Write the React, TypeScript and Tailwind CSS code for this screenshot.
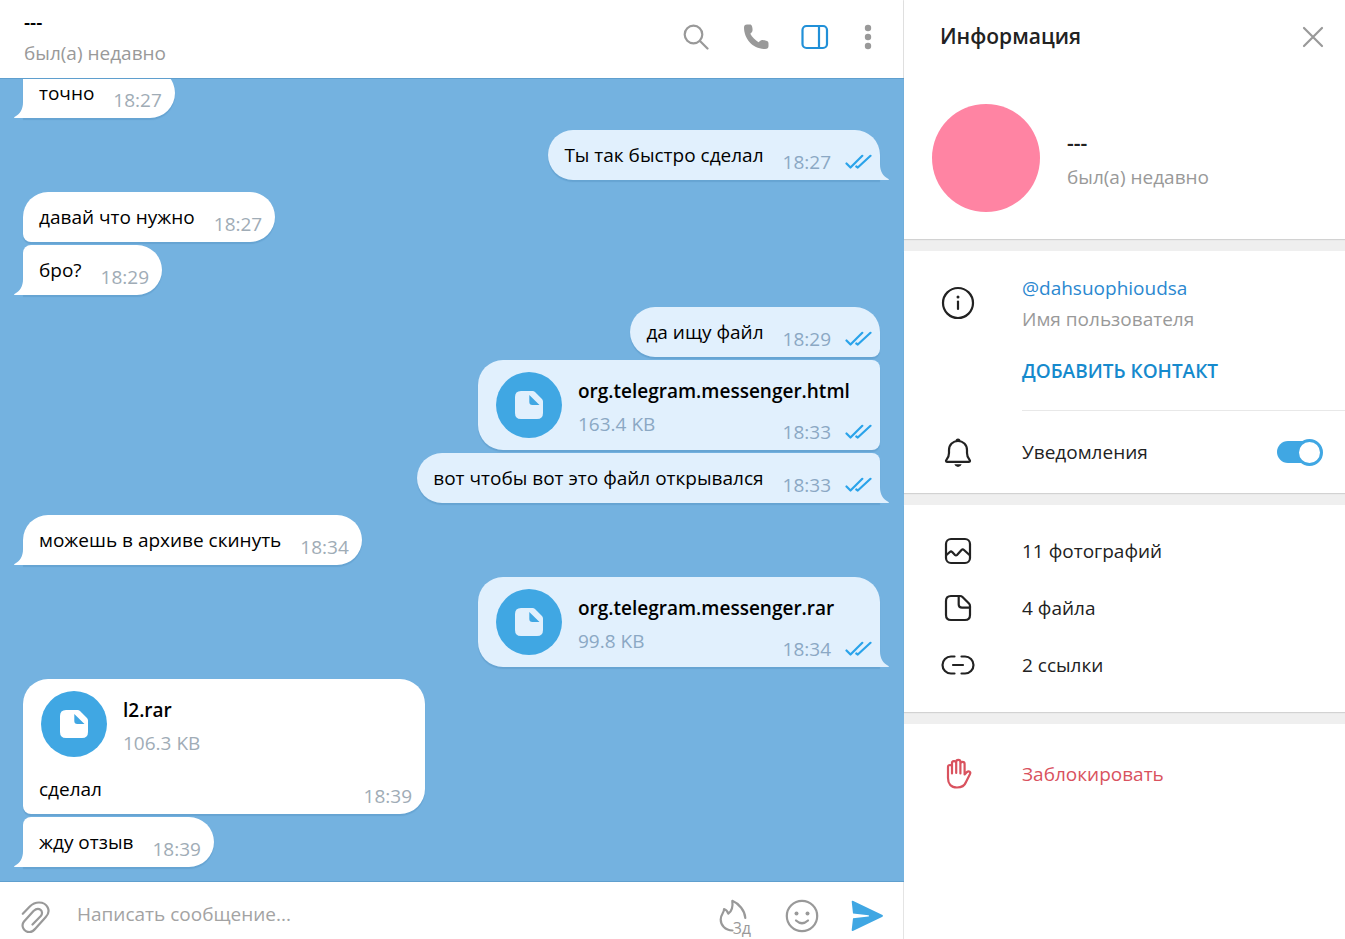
import React from "react";
import clsx from "clsx";

type Message = {
  id: number;
  out?: boolean;
  text?: string;
  file?: { name: string; size: string };
  time: string;
  // joined to the previous / next message of the same sender
  prev?: boolean;
  next?: boolean;
};

const messages: Message[] = [
  { id: 1, text: "точно", time: "18:27", prev: true },
  { id: 2, out: true, text: "Ты так быстро сделал", time: "18:27" },
  { id: 3, text: "давай что нужно", time: "18:27", next: true },
  { id: 4, text: "бро?", time: "18:29", prev: true },
  { id: 5, out: true, text: "да ищу файл", time: "18:29", next: true },
  {
    id: 6,
    out: true,
    file: { name: "org.telegram.messenger.html", size: "163.4 KB" },
    time: "18:33",
    prev: true,
    next: true,
  },
  {
    id: 7,
    out: true,
    text: "вот чтобы вот это файл открывался",
    time: "18:33",
    prev: true,
  },
  { id: 8, text: "можешь в архиве скинуть", time: "18:34" },
  {
    id: 9,
    out: true,
    file: { name: "org.telegram.messenger.rar", size: "99.8 KB" },
    time: "18:34",
  },
  {
    id: 10,
    file: { name: "l2.rar", size: "106.3 KB" },
    text: "сделал",
    time: "18:39",
    next: true,
  },
  { id: 11, text: "жду отзыв", time: "18:39", prev: true },
];

type IconProps = {
  w: number;
  h: number;
  className?: string;
  children: React.ReactNode;
};

function Icon({ w, h, className, children }: IconProps) {
  return (
    <svg
      width={w}
      height={h}
      viewBox={`0 0 ${w} ${h}`}
      fill="none"
      stroke="currentColor"
      strokeWidth="2.2"
      strokeLinecap="round"
      strokeLinejoin="round"
      aria-hidden="true"
      className={clsx("shrink-0", className)}
    >
      {children}
    </svg>
  );
}

function Checks() {
  return (
    <Icon w={27} h={16} className="text-[#2aa3ea]">
      <path d="M1.5 9.500 5.500 13.500 17.300 1.800M11.300 12.500 12.800 13.500 25.500 1.800" />
    </Icon>
  );
}

function FileBadge() {
  return (
    <span className="flex size-[66px] shrink-0 items-center justify-center rounded-full bg-[#40a7e3]">
      <svg width="28" height="28" viewBox="0 0 28 28" aria-hidden="true">
        <path
          fill="currentColor"
          fillRule="evenodd"
          d="M6 0H17.5Q19 0 20 1L27 8Q28 9 28 10.500V22Q28 28 22 28H6Q0 28 0 22V6Q0 0 6 0ZM14.300 4V11Q14.300 14 17.300 14H24.500Z"
        />
      </svg>
    </span>
  );
}

function Tail({ out }: { out?: boolean }) {
  return (
    <svg
      width="10"
      height="17"
      viewBox="0 0 10 17"
      aria-hidden="true"
      className={clsx(
        "absolute bottom-0",
        out ? "-right-[9px] -scale-x-100 text-[#e1f0fd]" : "-left-[9px] text-white"
      )}
    >
      <path fill="currentColor" d="M9 1H10V17H.5Q-.3 16.600 .5 16C6 13 9 8.500 9 1Z" />
    </svg>
  );
}

function Bubble({ message }: { message: Message }) {
  const { out, text, file, time, prev, next } = message;
  return (
    <li
      className={clsx(
        "relative shadow-[0_2px_1px_rgba(40,100,150,0.18)]",
        out
          ? "self-end rounded-l-[25px] bg-[#e1f0fd] pr-2"
          : "self-start rounded-r-[25px] bg-white pr-[13px]",
        out && (prev ? "rounded-tr-lg" : "rounded-tr-[25px]"),
        out && (next ? "rounded-br-lg" : "rounded-br-none"),
        !out && (prev ? "rounded-tl-lg" : "rounded-tl-[25px]"),
        !out && (next ? "rounded-bl-lg" : "rounded-bl-none"),
        next ? "mb-[3px]" : "mb-3",
        file && "w-[402px]"
      )}
    >
      {file && (
        <div className="flex gap-4 pt-3 pl-[18px]">
          <span className={out ? "text-[#e1f0fd]" : "text-white"}>
            <FileBadge />
          </span>
          <div className="pt-1.5 whitespace-nowrap">
            <a href="#file" className="block leading-[26px] font-semibold text-black">
              {file.name}
            </a>
            <p
              className={clsx(
                "mt-[7px] leading-[26px]",
                out ? "text-[#8ba8c4]" : "text-[#a0acb6]"
              )}
            >
              {file.size}
            </p>
          </div>
        </div>
      )}
      <div
        className={clsx(
          "flex items-end pl-4",
          file && !text && "-mt-[19px] pb-[5px]",
          file && text && "mt-[7px]"
        )}
      >
        {text && (
          <p className="py-3 pr-[19px] leading-[26px] whitespace-nowrap text-black">{text}</p>
        )}
        <span
          className={clsx(
            "ml-auto flex items-center gap-3.5 leading-[26px]",
            text && "pb-[5px]",
            out ? "text-[#8ba8c4]" : "text-[#a0acb6]"
          )}
        >
          <time>{time}</time>
          {out && <Checks />}
        </span>
      </div>
      {!next && <Tail out={out} />}
    </li>
  );
}

function ChatHeader() {
  return (
    <header className="flex h-[78px] shrink-0 items-center bg-white px-6 pb-1">
      <div className="min-w-0 flex-1">
        <h1 className="mb-[5px] leading-[26px] font-semibold text-black">---</h1>
        <p className="leading-[26px] text-[#999]">был(а) недавно</p>
      </div>
      <div className="flex items-center text-[#999]">
        <button type="button" aria-label="Поиск" className="mr-[35px]">
          <Icon w={26} h={26}>
            <circle cx="10.500" cy="10.500" r="8.800" />
            <path d="M17 17 24.500 24.500" />
          </Icon>
        </button>
        <button type="button" aria-label="Позвонить" className="mr-[31px]">
          <Icon w={26} h={26}>
            <path
              fill="currentColor"
              stroke="none"
              d="M3 .5C1 .5 0 1.800 0 3.500 0 15 9 25 21 25 23.500 25 24.500 24 24.500 22V19.500C24.500 17.500 23.500 17 22 16.700 18.500 16 17.500 15.700 16 17L14.500 18.300C11.500 16.500 8 13 6.300 9.800L7.800 8.200C8.800 7 8.800 5 8 2.200 7.600 1 7 .5 5.800 .5Z"
            />
          </Icon>
        </button>
        <button type="button" aria-label="Информация" className="mr-[35px] text-[#2190d8]">
          <Icon w={28} h={26}>
            <rect x="1.500" y="2" width="24.500" height="22" rx="4" />
            <path d="M18 2V24" />
          </Icon>
        </button>
        <button type="button" aria-label="Меню" className="mr-[7px]">
          <Icon w={8} h={26}>
            <g fill="currentColor" stroke="none">
              <circle cx="4" cy="4" r="3.200" />
              <circle cx="4" cy="13" r="3.200" />
              <circle cx="4" cy="22" r="3.200" />
            </g>
          </Icon>
        </button>
      </div>
    </header>
  );
}

function Composer() {
  return (
    <form
      className="flex h-[57px] shrink-0 items-center bg-white pt-2.5 pr-[19px] pl-[21px]"
      onSubmit={(e) => e.preventDefault()}
    >
      <button type="button" aria-label="Прикрепить файл" className="pt-1 text-[#999]">
        <Icon w={29} h={33}>
          <path d="M1.800 12.800 8.800 5.500C12 2.300 15 1.500 18 1.500 26.500 1.500 30.500 10 24.800 16L14.500 27.500C12.500 30 10.500 31 8.500 31 3 31 -.5 25 3 20.500L12.500 10C18 5 23.500 10.500 19.800 15L11.500 23.500" />
        </Icon>
      </button>
      <input
        type="text"
        aria-label="Сообщение"
        placeholder="Написать сообщение..."
        className="ml-[27px] h-8 min-w-0 flex-1 bg-transparent pb-1 outline-none placeholder:text-[#a3a3a3]"
      />
      <button
        type="button"
        aria-label="Автоудаление"
        className="relative mr-8 text-[#999]"
      >
        <Icon w={34} h={34}>
          <path d="M13.500 31.500C6 31.500 1.700 26 1.700 20.500 1.700 15 5.500 13.500 5 10 7 10.500 8.500 12.500 9.300 14.700 13 12 14 7 13.300 1.800 20 4.500 26 12 26.300 19" />
        </Icon>
        <span className="absolute right-0.5 -bottom-[3px] text-[16px] leading-4">3д</span>
      </button>
      <button type="button" aria-label="Эмодзи" className="mr-8 text-[#999]">
        <Icon w={34} h={34}>
          <circle cx="17" cy="17" r="15.200" />
          <g fill="currentColor" stroke="none">
            <circle cx="11.500" cy="14.500" r="2" />
            <circle cx="22.500" cy="14.500" r="2" />
          </g>
          <path d="M11 21.500Q17 27 23 21.500" />
        </Icon>
      </button>
      <button type="submit" aria-label="Отправить" className="text-[#40a7e3]">
        <Icon w={33} h={32}>
          <path
            fill="currentColor"
            stroke="none"
            d="M1.800 .7 31.500 15Q32.500 15.800 31.500 16.700L1.800 31Q.6 31.200 .7 30L2 18.200 17.500 16.600Q19 16 17.500 15.200L2 13.600 .7 1.500Q.8 .5 1.800 .7Z"
          />
        </Icon>
      </button>
    </form>
  );
}

const media = [
  {
    label: "11 фотографий",
    icon: (
      <Icon w={28} h={28}>
        <rect x="2" y="2" width="24" height="24" rx="5" />
        <path d="M2.500 18 5.800 15Q7 14 8.200 15L11 18Q12 19 13 18L17.500 13Q18.700 11.800 20 13L25.500 18" />
      </Icon>
    ),
  },
  {
    label: "4 файла",
    icon: (
      <Icon w={28} h={28}>
        <path d="M7 2H16Q17.500 2 18.500 3L25 9.500Q26 10.500 26 12V21Q26 26 21 26H7Q2 26 2 21V7Q2 2 7 2Z" />
        <path d="M14.700 2V10.500Q14.700 13.700 18 13.700H26" />
      </Icon>
    ),
  },
  {
    label: "2 ссылки",
    icon: (
      <Icon w={34} h={28}>
        <path d="M13.500 5.500H10A8.500 8.500 0 0 0 10 22.500H13.500M20.500 5.500H24A8.500 8.500 0 0 1 24 22.500H20.500M12 14H22" />
      </Icon>
    ),
  },
];

function InfoPanel() {
  const [notify, setNotify] = React.useState(true);

  return (
    <aside className="flex w-[441px] shrink-0 flex-col gap-3 bg-[#efefef] text-[#222]">
      <section className="bg-white pb-[27px] shadow-[0_1px_1px_rgba(0,0,0,0.12)]">
        <div className="flex h-[74px] items-center justify-between pr-[21px] pl-9">
          <h2 className="pb-0.5 text-[21px] leading-7 font-semibold">Информация</h2>
          <button type="button" aria-label="Закрыть" className="text-[#999]">
            <Icon w={22} h={22}>
              <path d="M2 2 20 20M20 2 2 20" />
            </Icon>
          </button>
        </div>
        <div className="mt-[30px] flex items-center gap-[27px] pl-7">
          <div className="size-[108px] rounded-full bg-[#ff84a3]" />
          <div className="pt-1">
            <p className="mb-2 text-[21px] leading-[26px] font-semibold">---</p>
            <p className="leading-[26px] text-[#999]">был(а) недавно</p>
          </div>
        </div>
      </section>

      <section className="bg-white shadow-[0_1px_1px_rgba(0,0,0,0.12)]">
        <div className="flex pt-6 pl-9">
          <Icon w={36} h={56}>
            <circle cx="18" cy="28" r="15" />
            <path d="M18 26.500V34" />
            <circle cx="18" cy="22" r="1.500" fill="currentColor" stroke="none" />
          </Icon>
          <div className="ml-[46px] flex-1 border-b border-[#e8e8e8] pb-[26px]">
            <a href="#username" className="block leading-[26px] text-[#2b88d0]">
              @dahsuophioudsa
            </a>
            <p className="mt-[5px] leading-[26px] text-[#999]">Имя пользователя</p>
            <button
              type="button"
              className="mt-[26px] block leading-[26px] font-semibold text-[#168acd]"
            >
              ДОБАВИТЬ КОНТАКТ
            </button>
          </div>
        </div>
        <label className="flex h-[82px] items-center pr-[22px] pl-9">
          <span className="mr-[46px] flex w-9 justify-center">
            <Icon w={28} h={32}>
              <path d="M3 25.800C1.800 25.800 1.700 24.500 2.500 23.700 4.300 21.800 5 20 5 17V14C5 8.500 9 5 14 5S23 8.500 23 14V17C23 20 23.700 21.800 25.500 23.700 26.300 24.500 26.200 25.800 25 25.800Z" />
              <path
                fill="currentColor"
                stroke="none"
                d="M11.500 5A2.500 2.500 0 1 1 16.500 5ZM10.300 28.200H17.700Q16.500 31 14 31T10.300 28.200Z"
              />
            </Icon>
          </span>
          <span className="flex-1">Уведомления</span>
          <span className="relative flex h-[27px] w-[46px] items-center">
            <input
              type="checkbox"
              role="switch"
              checked={notify}
              onChange={(e) => setNotify(e.target.checked)}
              className="peer h-[22px] w-11 appearance-none rounded-full bg-[#b5b5b5] checked:bg-[#40a7e3]"
            />
            <span className="pointer-events-none absolute top-0 left-0 size-[27px] rounded-full border-[3px] border-[#b5b5b5] bg-white peer-checked:right-0 peer-checked:left-auto peer-checked:border-[#40a7e3]" />
          </span>
        </label>
      </section>

      <section className="bg-white pt-[18px] pb-[18px] shadow-[0_1px_1px_rgba(0,0,0,0.12)]">
        {media.map((item) => (
          <button
            key={item.label}
            type="button"
            className="flex h-[57px] w-full items-center pl-9"
          >
            <span className="mr-[46px] flex w-9 justify-center pb-0.5">{item.icon}</span>
            {item.label}
          </button>
        ))}
      </section>

      <section className="flex-1 bg-white pt-[22px]">
        <button
          type="button"
          className="flex h-[57px] w-full items-center pl-9 text-[#d9525e]"
        >
          <span className="mr-[46px] flex w-9 justify-center pb-0.5 pl-0.5">
            <Icon w={28} h={32}>
              <path d="M3 20V9A2 2 0 0 1 7 9V5.500A2.100 2.100 0 0 1 11.200 5V4A2.100 2.100 0 0 1 15.400 4V6A2.100 2.100 0 0 1 19.600 6V16.500L22 14C24 12.500 26 14 25 16L21 24C19.500 28 17 29.500 12 29.500 6 29.500 3 26 3 20ZM7 9V15.500M11.200 5V15M15.400 6V15.500" />
            </Icon>
          </span>
          Заблокировать
        </button>
      </section>
    </aside>
  );
}

export default function App() {
  return (
    <div className="flex h-screen overflow-hidden bg-white font-['Open_Sans','Noto_Sans',sans-serif] text-[19px]">
      <div className="flex min-w-0 flex-1 flex-col border-r border-[#e4e4e4]">
        <ChatHeader />
        <main className="-mr-px flex min-h-0 flex-1 flex-col justify-end overflow-hidden border-y border-[#5f9fce] bg-[#74b2e0]">
          <ul className="flex flex-col px-6 pb-0.5 pl-[23px]">
            {messages.map((m) => (
              <Bubble key={m.id} message={m} />
            ))}
          </ul>
        </main>
        <Composer />
      </div>
      <InfoPanel />
    </div>
  );
}
